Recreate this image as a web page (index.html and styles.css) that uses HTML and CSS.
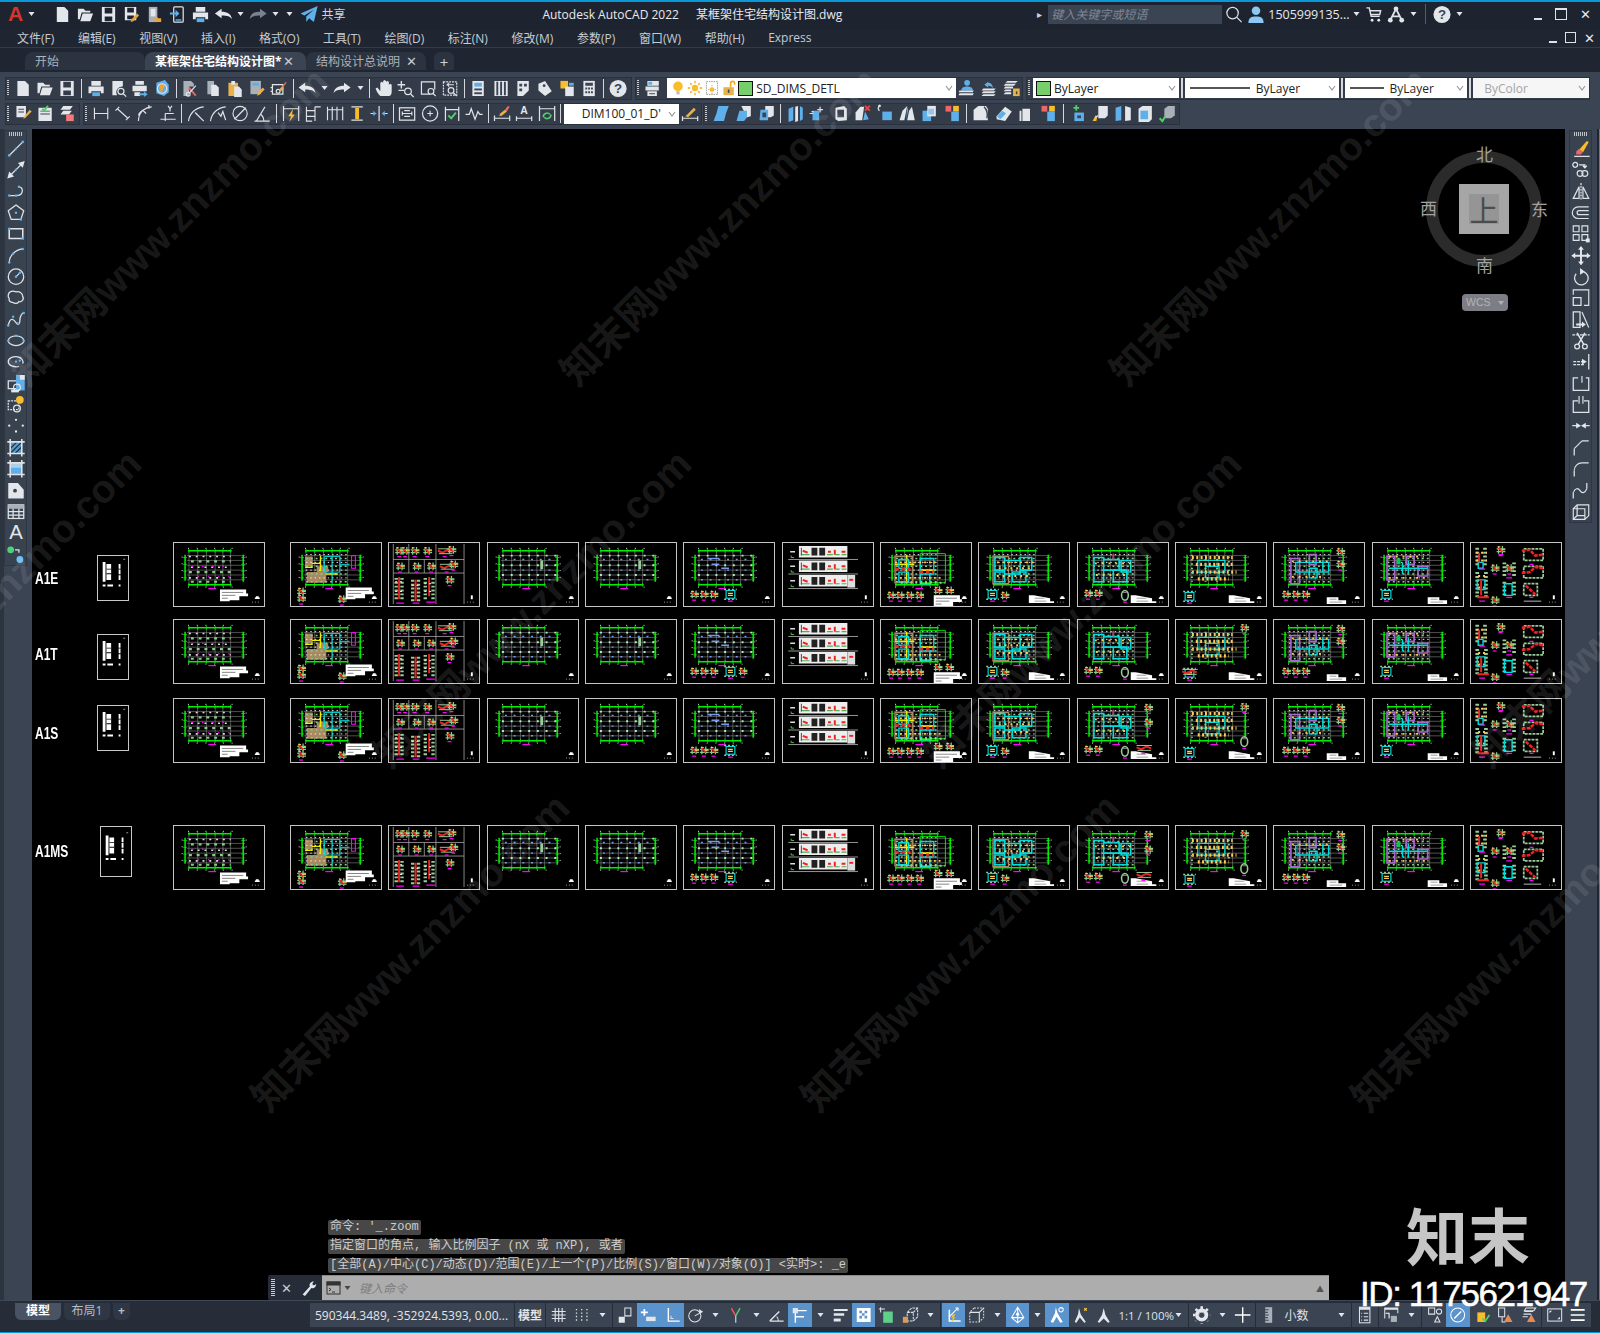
FILE: index.html
```html
<!DOCTYPE html>
<html lang="zh-CN">
<head>
<meta charset="utf-8">
<title>Autodesk AutoCAD 2022</title>
<link rel="stylesheet" href="styles.css">
</head>
<body>
<svg class="defs" xmlns="http://www.w3.org/2000/svg">
<defs>
<!-- toolbar icons -->
<symbol id="new" viewBox="0 0 20 20"><path class="w" d="M4 2h8l4 4v12H4z"/></symbol>
<symbol id="open" viewBox="0 0 20 20"><path class="w" d="M2 4h6l2 2h5v2H6l-2 7H2zM7 9h11l-3 8H4.500z"/></symbol>
<symbol id="save" viewBox="0 0 20 20"><path class="w" fill-rule="evenodd" d="M3 2h14v16H3zM6 3v6h8V3zM6 12v5h8v-5z"/></symbol>
<symbol id="saveas" viewBox="0 0 20 20"><path class="w" fill-rule="evenodd" d="M3 2h12v14H3zM5.500 3v5h7V3zM5.500 11v4h7v-4z"/><path class="o" d="M9 18l1-3 6-6 2 2-6 6z"/></symbol>
<symbol id="sset" viewBox="0 0 20 20"><path class="g" d="M4 2h9v16H4z"/><rect class="w" x="6" y="4" width="5" height="8"/><path class="o" d="M10 13h3l1 1h3v4h-7z"/></symbol>
<symbol id="phone" viewBox="0 0 20 20"><rect x="6" y="2" width="10" height="16" rx="1"/><path class="b" d="M2 8h6V5l4 4-4 4v-3H2z"/><rect class="b" x="8" y="15" width="6" height="1.500"/></symbol>
<symbol id="print" viewBox="0 0 20 20"><path class="w" d="M5 2h10v5H5zM2 8h16v7h-3v-2H5v2H2z"/><rect class="b" x="6" y="14" width="8" height="4"/></symbol>
<symbol id="prev" viewBox="0 0 20 20"><path class="w" d="M4 2h11v6a6 6 0 0 0-6 9H4z"/><circle cx="13" cy="13" r="3.200"/><path d="M15.500 15.500l3 3"/></symbol>
<symbol id="plot" viewBox="0 0 20 20"><path class="w" d="M5 2h9v4H5zM2 7h15v6H2zM4 14h6v4H4z"/><path class="b" d="M9 15h5v-2l4 3-4 3v-2H9z"/></symbol>
<symbol id="globe" viewBox="0 0 20 20"><path class="b" d="M4 4l9-3 4 5v8l-5 4-8-3z"/><path class="o" d="M7 5l4-1 2 3-2 3-1 5-3-4z"/><circle cx="10" cy="10" r="5"/></symbol>
<symbol id="cut" viewBox="0 0 20 20"><path class="g" d="M3 2h8l3 3v3H9v10H3z"/><path class="r" d="M9 8l8 9-2 1-7-8z"/><path d="M16 7L9 15"/><circle cx="8" cy="16" r="2"/></symbol>
<symbol id="copy" viewBox="0 0 20 20"><path class="g" d="M4 2h7v14H4z"/><path class="w" d="M8 6h5l3 3v9H8z"/></symbol>
<symbol id="paste" viewBox="0 0 20 20"><path class="t" d="M3 4h10v14H3z"/><path class="w" d="M6 2h4v4H6zM9 8h5l3 3v8H9z"/></symbol>
<symbol id="match" viewBox="0 0 20 20"><rect class="g" x="3" y="2" width="11" height="14"/><rect class="b" x="5" y="4" width="7" height="3"/><path class="t" d="M10 18l1-4 5-5 2 2-5 5z"/></symbol>
<symbol id="brush" viewBox="0 0 20 20"><path d="M3 6h11v10H3zM3 9H1M3 13H1"/><circle cx="9" cy="13" r="2"/><path class="r" d="M13 8l4-5 1 1-4 5z"/><path class="t" d="M10 11l3-3 2 2-3 3z"/></symbol>
<symbol id="undo" viewBox="0 0 20 20"><path class="w" d="M1 9l7-5v3c6 0 10 2 11 8-2-3-5-4-11-4v3z"/></symbol>
<symbol id="redo" viewBox="0 0 20 20"><path class="w" d="M19 9l-7-5v3C6 7 2 9 1 15c2-3 5-4 11-4v3z"/></symbol>
<symbol id="redod" viewBox="0 0 20 20"><path fill="#7a8290" stroke="none" d="M19 9l-7-5v3C6 7 2 9 1 15c2-3 5-4 11-4v3z"/></symbol>
<symbol id="pan" viewBox="0 0 20 20"><path class="w" d="M6 18c-2-2-4-5-5-8l2-1 3 4V4l1.500-1L9 4v6V2l1.500-1L12 2v8V3l1.500-1L15 3v8V6l1.500-1L18 6v7c0 3-1 5-3 5z"/></symbol>
<symbol id="zrt" viewBox="0 0 20 20"><path stroke-width="1.500" d="M5 2v8M1 6h8M2 12h6"/><circle cx="12" cy="13" r="3.500"/><path d="M15 16l3 3"/></symbol>
<symbol id="zw" viewBox="0 0 20 20"><path d="M12 16H3V3h14v8"/><circle cx="13" cy="13" r="3"/><path d="M15 15l3 3"/></symbol>
<symbol id="zp" viewBox="0 0 20 20"><path stroke-dasharray="2 1" d="M3 3h14v14H3z"/><path class="sb" d="M14 6H7l2-2M7 6l2 2"/><circle cx="11" cy="12" r="3"/><path d="M13 14l4 4"/></symbol>
<symbol id="props" viewBox="0 0 20 20"><path class="w" d="M4 2h12v16H4z"/><rect class="b" x="6" y="4" width="8" height="4"/><rect class="d" x="6" y="10" width="8" height="2"/><rect class="d" x="6" y="14" width="8" height="2"/></symbol>
<symbol id="dc" viewBox="0 0 20 20"><path class="w" d="M3 2h14v16H3z"/><path class="d" d="M5 3h2v14H5zM9 3h2v14H9zM13 3h2v14h-2z"/></symbol>
<symbol id="tp" viewBox="0 0 20 20"><path class="w" d="M4 2h12v10l-6 6H4z"/><path class="d" d="M6 5h3v3H6zM11 5h3v3h-3zM6 10h3v3H6z"/></symbol>
<symbol id="tag" viewBox="0 0 20 20"><path class="w" d="M3 5l7-3 7 11-7 5-7-6z"/><circle class="d" cx="9" cy="7" r="1.500"/></symbol>
<symbol id="mk" viewBox="0 0 20 20"><rect class="y" x="3" y="2" width="8" height="8"/><rect class="w" x="8" y="8" width="9" height="10"/><rect class="b" x="12" y="4" width="5" height="3"/></symbol>
<symbol id="calc" viewBox="0 0 20 20"><rect class="w" x="4" y="2" width="12" height="16"/><path class="d" d="M6 4h8v3H6zM6 9h2v2H6zM9 9h2v2H9zM12 9h2v2h-2zM6 13h2v2H6zM9 13h2v2H9zM12 13h2v2h-2z"/></symbol>
<symbol id="lyp" viewBox="0 0 20 20"><path class="w" d="M4 2h12v5H4zM2 8h14v4H2zM4 13h10v5H4z"/><rect class="b" x="5" y="3" width="4" height="3"/><rect class="d" x="6" y="15" width="6" height="1"/></symbol>
<symbol id="lym" viewBox="0 0 20 20"><circle class="b" cx="10" cy="4" r="3"/><path class="b" d="M4 12c0-3 3-4 6-4s6 1 6 4z"/><path class="w" d="M2 12h15l-1 2H1zM2 15h15l-1 2H1z"/></symbol>
<symbol id="lyb" viewBox="0 0 20 20"><path class="w" d="M4 10h13l-2 2H2zM4 13h13l-2 2H2zM4 16h13l-2 2H2z"/><path class="b" d="M9 3L5 6l4 3V7c3 0 4 1 5 3 0-4-2-6-5-6z"/></symbol>
<symbol id="lyl" viewBox="0 0 20 20"><path class="w" d="M5 2h11l-2 2H3zM3 5h11l-2 2H1zM3 8h8v2H1zM3 11h6v2H1zM3 14h6v2H1z"/><rect class="t" x="11" y="10" width="7" height="8"/><rect class="d" x="14" y="13" width="1.500" height="3"/></symbol>
<symbol id="bulb" viewBox="0 0 20 20"><circle class="y" cx="10" cy="8" r="6"/><rect fill="#bbb" stroke="none" x="8" y="14" width="4" height="4"/></symbol>
<symbol id="sun" viewBox="0 0 20 20"><circle class="y" cx="10" cy="10" r="4"/><path stroke="#f7a71b" stroke-width="1.600" d="M10 1v3M10 16v3M1 10h3M16 10h3M4 4l2 2M14 14l2 2M4 16l2-2M14 6l2-2"/></symbol>
<symbol id="vpf" viewBox="0 0 20 20"><path stroke-dasharray="2 1" d="M3 2h14v16H3z"/><circle class="y" cx="10" cy="12" r="3"/><path stroke="#f7a71b" d="M10 6v2M5 12h2M13 12h2M10 16v2"/></symbol>
<symbol id="lock" viewBox="0 0 20 20"><rect class="t" x="3" y="9" width="13" height="10"/><path stroke="#f7a71b" stroke-width="2" d="M12 9V4c0-3 5-3 5 0v2"/><rect class="d" x="8.500" y="12" width="2" height="4"/></symbol>
<!-- dim toolbar -->
<symbol id="t1" viewBox="0 0 20 20"><path class="w" d="M3 2h10v12H3z"/><path class="d" d="M5 5h6v1H5zM5 8h6v1H5z"/><path class="t" d="M10 16l2-4 5-6 2 2-6 6z"/></symbol>
<symbol id="t2" viewBox="0 0 20 20"><path class="w" d="M3 4h14v14H3z"/><path class="d" d="M5 7h10v1H5zM5 10h10v1H5z"/><path stroke="#4fd06c" stroke-width="2" d="M7 5l2 2 4-5"/></symbol>
<symbol id="t3" viewBox="0 0 20 20"><path class="w" d="M6 2h10l-3 4H3zM6 7h9l-3 4H3z"/><rect fill="#f27a7a" stroke="none" x="9" y="11" width="8" height="7"/></symbol>
<symbol id="dl" viewBox="0 0 20 20"><path class="sb" d="M3 4v12M17 4v12M3 10h14"/></symbol>
<symbol id="da" viewBox="0 0 20 20"><path class="sb" d="M2 7l4-4M13 17l4-4M4 5l11 10"/></symbol>
<symbol id="dar" viewBox="0 0 20 20"><path class="sb" d="M3 18C3 10 8 4 17 3M3 12C4 8 8 6 11 5"/><path d="M14 1v4M8 7l3 3"/></symbol>
<symbol id="dor" viewBox="0 0 20 20"><path class="sb" d="M2 16h16M7 10v8M7 10h9"/><path d="M10 2l2 3 2-3M12 5v3"/></symbol>
<symbol id="dra" viewBox="0 0 20 20"><path class="sb" d="M2 18C3 10 9 4 18 3"/><path d="M9 9l9 9"/></symbol>
<symbol id="djo" viewBox="0 0 20 20"><path class="sb" d="M2 18C3 10 9 4 18 3"/><path d="M10 9l3 4 2-5 3 9"/></symbol>
<symbol id="ddi" viewBox="0 0 20 20"><circle class="sb" cx="10" cy="10" r="7.500"/><path d="M4 16L16 4"/></symbol>
<symbol id="dan" viewBox="0 0 20 20"><path class="sb" d="M2 18h16M4 18L13 3"/><path d="M12 18c0-3-1-5-3-7"/></symbol>
<symbol id="dqk" viewBox="0 0 20 20"><path class="sb" d="M2 2v16M18 2v16M2 5h16"/><path class="y" d="M12 5l-5 8h3l-2 6 6-8h-3z"/></symbol>
<symbol id="dbs" viewBox="0 0 20 20"><path class="sb" d="M3 3v15h6M12 3h6M3 7h9M12 3v15M3 13h9"/></symbol>
<symbol id="dct" viewBox="0 0 20 20"><path class="sb" d="M2 3v14M7 3v14M12 3v14M18 3v14M2 6h16"/></symbol>
<symbol id="dsp" viewBox="0 0 20 20"><path d="M4 3h12M4 17h12"/><rect class="y" x="8" y="4" width="4" height="12"/></symbol>
<symbol id="dbr" viewBox="0 0 20 20"><path class="sb" d="M1 10h6M13 10h6"/><path d="M10 2v16"/><path class="b" d="M4 7l3 3-3 3zM16 7l-3 3 3 3z"/></symbol>
<symbol id="dto" viewBox="0 0 20 20"><rect x="2" y="4" width="16" height="13"/><path class="sb" d="M5 10h10M5 8v4M15 8v4"/><path d="M7 13h6M7 7h6"/></symbol>
<symbol id="dce" viewBox="0 0 20 20"><circle cx="10" cy="10" r="8"/><path class="sb" d="M10 7v6M7 10h6"/></symbol>
<symbol id="din" viewBox="0 0 20 20"><path d="M3 3v15M17 3v15M3 6h14"/><path stroke="#4fd06c" stroke-width="2" d="M6 12l3 3 5-6"/></symbol>
<symbol id="djg" viewBox="0 0 20 20"><path d="M1 11h4l2-6 4 11 3-8 2 3h3"/></symbol>
<symbol id="ded" viewBox="0 0 20 20"><path d="M2 18v-6M18 18v-6M2 15h16"/><path class="r" d="M13 6l3-4 2 1-3 5z"/><path class="t" d="M7 13l1-3 5-4 2 2-5 4z"/></symbol>
<symbol id="dtx" viewBox="0 0 20 20"><path d="M2 18v-5M18 18v-5M2 15h16"/><text class="tx" x="10" y="11">A</text></symbol>
<symbol id="dup" viewBox="0 0 20 20"><path d="M2 2v16M18 2v16M2 5h16"/><path stroke="#4fd06c" stroke-width="1.600" d="M6 14a4 4 0 0 1 7-3M14 11a4 4 0 0 1-7 3"/></symbol>
<symbol id="ds" viewBox="0 0 20 20"><path d="M2 18v-5M18 18v-5M2 15h16"/><path class="t" d="M5 13l2-2 7-7 2 2-8 8z"/></symbol>
<!-- solids -->
<symbol id="s1" viewBox="0 0 20 20"><path class="b" d="M7 2h11l-3 8-2 8H2l3-8z"/></symbol>
<symbol id="s2" viewBox="0 0 20 20"><path class="w" d="M8 2h10v11l-4 1z"/><path class="b" d="M6 7h8v7l-3 4H3z"/></symbol>
<symbol id="s3" viewBox="0 0 20 20"><path class="w" d="M9 2h9v10l-3 2H9z"/><path class="b" d="M4 6h8v11H3z"/><rect class="d" x="6" y="9" width="4" height="5"/></symbol>
<symbol id="s4" viewBox="0 0 20 20"><path class="w" d="M10 3l3-1v16l-3 1z"/><path class="b" d="M3 5l5-2v14l-5 2zM15 2l3 2v12l-3 2z"/></symbol>
<symbol id="s5" viewBox="0 0 20 20"><path class="b" d="M4 7h7v10H4z"/><path d="M3 8h2M1 10h4M12 3v6M9 6h6"/></symbol>
<symbol id="s6" viewBox="0 0 20 20"><path class="w" d="M5 4l9-2 3 3v12l-9 1-3-2z"/><rect class="d" x="7" y="6" width="7" height="8"/></symbol>
<symbol id="s7" viewBox="0 0 20 20"><path class="w" d="M3 17V9l5-6h4l-2 14z"/><path class="b" d="M11 17l2-9 4 8z"/><path stroke="#ee4444" stroke-width="2" d="M13 2l5 5M18 2l-5 5"/></symbol>
<symbol id="s8" viewBox="0 0 20 20"><path d="M4 2a3 3 0 0 0 0 5"/><circle cx="4" cy="2" r=".8"/><rect class="b" x="7" y="8" width="10" height="9"/></symbol>
<symbol id="s9" viewBox="0 0 20 20"><path class="w" d="M2 17l3-10 5-5-3 15zM10 17l2-10 3-4 3 14z"/><path class="b" d="M10 3l1 3-2 11z"/></symbol>
<symbol id="s10" viewBox="0 0 20 20"><rect class="b" x="3" y="7" width="9" height="11"/><rect class="w" x="8" y="2" width="9" height="11"/><rect class="b" x="9" y="5" width="6" height="6" opacity=".6"/></symbol>
<symbol id="s11" viewBox="0 0 20 20"><rect fill="#ee6666" stroke="none" x="3" y="2" width="6" height="6"/><rect class="y" x="11" y="2" width="6" height="6"/><rect class="b" x="9" y="8" width="8" height="10"/></symbol>
<symbol id="s12" viewBox="0 0 20 20"><path class="w" d="M2 6l5-4h8l2 3v12H2z"/><path stroke="#3b4453" stroke-width="1.500" d="M13 3c3 3 4 7 3 12"/></symbol>
<symbol id="s13" viewBox="0 0 20 20"><path class="w" d="M2 13l9-10 7 5-7 10-9-2z"/><path class="b" d="M2 13l6-6 4 3-6 6z"/></symbol>
<symbol id="s14" viewBox="0 0 20 20"><path class="w" d="M3 7h2v11H3zM6 5h8v13H6z"/></symbol>
<symbol id="s15" viewBox="0 0 20 20"><path stroke="#4fd06c" stroke-width="1.800" d="M8 1v6M5 4h6"/><rect class="b" x="6" y="9" width="10" height="9"/><rect class="d" x="9" y="12" width="4" height="3"/></symbol>
<symbol id="s16" viewBox="0 0 20 20"><path class="w" d="M8 2h10v10l-3 3H8z"/><path class="y" d="M2 18l3-6 2 1-1 5z"/><path d="M8 12L5 14"/></symbol>
<symbol id="s17" viewBox="0 0 20 20"><path class="b" d="M2 4l6-2v15l-6 1z"/><path class="w" d="M12 2l6 2v13l-6 1z"/></symbol>
<symbol id="s18" viewBox="0 0 20 20"><path class="w" d="M3 5l4-3h10v14l-3 3H3z"/><rect class="b" x="5" y="7" width="8" height="9"/></symbol>
<symbol id="s19" viewBox="0 0 20 20"><path class="g" d="M7 5l4-3h7v10l-4 3H7z"/><path stroke="#4fd06c" stroke-width="2" d="M2 15l3 3 3-5"/></symbol>
<!-- left tools -->
<symbol id="l1" viewBox="0 0 20 20"><path d="M3 17L17 3"/><circle class="b" cx="3" cy="17" r="1.400"/><circle class="b" cx="17" cy="3" r="1.400"/><circle class="b" cx="10" cy="10" r="1.200"/></symbol>
<symbol id="l2" viewBox="0 0 20 20"><path d="M5 15L15 5"/><path class="w" d="M1 19l2-7 5 5zM19 1l-2 7-5-5z"/><circle class="b" cx="10" cy="10" r="1.200"/></symbol>
<symbol id="l3" viewBox="0 0 20 20"><path d="M3 14h8c7 0 7-9 2-9"/><circle class="b" cx="3" cy="14" r="1.300"/><circle class="b" cx="10" cy="14" r="1.300"/><circle class="b" cx="13" cy="5" r="1.300"/></symbol>
<symbol id="l4" viewBox="0 0 20 20"><path d="M10 2l8 6-3 9H5L2 8z"/><circle class="b" cx="10" cy="10" r="1.300"/><circle class="b" cx="15" cy="17" r="1.300"/></symbol>
<symbol id="l5" viewBox="0 0 20 20"><path stroke-width="1.600" d="M3 5h14v10H3z"/><circle class="b" cx="3" cy="5" r="1.300"/><circle class="b" cx="17" cy="15" r="1.300"/></symbol>
<symbol id="l6" viewBox="0 0 20 20"><path d="M3 17C3 10 9 4 17 3"/><circle class="b" cx="3" cy="17" r="1.300"/><circle class="b" cx="7" cy="8" r="1.300"/><circle class="b" cx="17" cy="3" r="1.300"/></symbol>
<symbol id="l7" viewBox="0 0 20 20"><circle cx="10" cy="10" r="8"/><path class="sb" d="M10 10l4-4"/><circle class="b" cx="10" cy="10" r="1.300"/><circle class="b" cx="14" cy="6" r="1.300"/></symbol>
<symbol id="l8" viewBox="0 0 20 20"><path d="M4 4c3-2 4 0 6 0 3-1 7 1 7 5 2 3-2 6-4 5-2 3-5 2-6 1-3 0-5-2-4-4C1 9 2 5 4 4z"/></symbol>
<symbol id="l9" viewBox="0 0 20 20"><path d="M2 16c2-10 6-6 8-3s4 2 4-2 2-8 4-8"/><circle class="b" cx="2" cy="16" r="1.300"/><circle class="b" cx="7" cy="7" r="1.300"/><circle class="b" cx="12" cy="14" r="1.300"/><circle class="b" cx="18" cy="3" r="1.300"/></symbol>
<symbol id="l10" viewBox="0 0 20 20"><ellipse cx="10" cy="10" rx="8" ry="5"/><circle class="b" cx="10" cy="5" r="1.300"/><circle class="b" cx="18" cy="10" r="1.300"/><circle class="b" cx="2" cy="10" r="1.300"/></symbol>
<symbol id="l11" viewBox="0 0 20 20"><path d="M13 15C8 16 2 14 2 10s6-6 10-5 6 4 5 7"/><circle class="b" cx="10" cy="10" r="1.200"/><circle class="b" cx="14" cy="9" r="1.200"/></symbol>
<symbol id="l12" viewBox="0 0 20 20"><path d="M2 7h10v8H2z"/><rect class="b" x="10" y="1" width="9" height="16"/><path class="w" d="M14 1h5v5h-5z"/><circle cx="11" cy="14" r="3.500"/><rect class="w" x="5" y="16" width="8" height="3"/></symbol>
<symbol id="l13" viewBox="0 0 20 20"><path stroke-dasharray="2 1" d="M2 6h11v9H2z"/><circle class="y" cx="14" cy="5" r="4"/><circle cx="11" cy="14" r="3.500"/></symbol>
<symbol id="l14" viewBox="0 0 20 20"><circle class="w" cx="10" cy="4" r="1.200"/><circle class="w" cx="3" cy="10" r="1.200"/><circle class="w" cx="17" cy="10" r="1.200"/><circle class="w" cx="10" cy="16" r="1.200"/></symbol>
<symbol id="l15" viewBox="0 0 20 20"><rect class="b" x="4" y="4" width="12" height="12" opacity=".8"/><path stroke="#25303f" d="M5 15L15 5M4 11l7-7M9 16l7-7"/><path stroke-width="1.600" d="M1 4h18M1 16h18M4 1v18M16 1v18"/></symbol>
<symbol id="l16" viewBox="0 0 20 20"><rect class="b" x="4" y="4" width="12" height="12"/><path class="w" opacity=".6" d="M4 4h12v5H4z"/><path stroke-width="1.600" d="M1 4h18M1 16h18M4 1v18M16 1v18"/></symbol>
<symbol id="l17" viewBox="0 0 20 20"><path class="w" d="M2 2h10l6 7v9H2z"/><circle class="d" cx="9" cy="10" r="2"/></symbol>
<symbol id="l18" viewBox="0 0 20 20"><rect x="2" y="3" width="16" height="14"/><rect class="g" x="2" y="3" width="16" height="4"/><path d="M2 10h16M2 13.500h16M7 7v10M13 7v10"/></symbol>
<symbol id="l19" viewBox="0 0 20 20"><text class="tx big" x="10" y="17">A</text></symbol>
<symbol id="l20" viewBox="0 0 20 20"><circle fill="#4fd07a" stroke="none" cx="4.500" cy="5" r="3.500"/><circle fill="#6ec0f5" stroke="none" cx="14" cy="15" r="3.500"/><path d="M9 5h4v3"/></symbol>
<!-- right tools -->
<symbol id="r1" viewBox="0 0 20 20"><path class="y" d="M8 11l8-9 2 1-6 11z"/><path class="r" d="M5 13l3-3 4 3-2 3H5z"/><path class="sb" stroke-width="1.600" d="M3 18h16"/></symbol>
<symbol id="r2" viewBox="0 0 20 20"><circle cx="4" cy="5" r="2.500"/><path d="M8 5h6v3M12 6l2 2 2-2"/><circle class="sb" cx="9" cy="14" r="3"/><circle class="sb" cx="14" cy="14" r="3"/></symbol>
<symbol id="r3" viewBox="0 0 20 20"><path d="M8 5L2 17h6z"/><path d="M10 1v18" stroke-dasharray="2 1"/><path class="sb" d="M12 5l6 12h-6z"/></symbol>
<symbol id="r4" viewBox="0 0 20 20"><path class="sb" stroke-width="1.600" d="M18 4H7a6 6 0 0 0 0 12h11"/><path d="M18 8H8a2 2 0 0 0 0 4h10"/></symbol>
<symbol id="r5" viewBox="0 0 20 20"><path class="sb" d="M2 2h6v6H2zM11 2h6v6h-6zM2 11h6v6H2z"/><path d="M11 11h6v6h-6z"/><rect class="w" x="15" y="15" width="4" height="4"/></symbol>
<symbol id="r6" viewBox="0 0 20 20"><path class="w" d="M10 0l3 4h-2v5h5V7l4 3-4 3v-2h-5v5h2l-3 4-3-4h2v-5H4v2l-4-3 4-3v2h5V4H7z"/></symbol>
<symbol id="r7" viewBox="0 0 20 20"><path d="M5 7a7 7 0 1 0 8-2"/><path class="w" d="M9 1l5 4-5 3z"/></symbol>
<symbol id="r8" viewBox="0 0 20 20"><path d="M2 10h8v8H2z"/><path class="sb" stroke-width="1.600" d="M2 7V2h16v16h-5"/></symbol>
<symbol id="r9" viewBox="0 0 20 20"><path d="M2 2h7v16H2z"/><path class="sb" d="M11 2l7 16"/><path class="w" d="M5 14h6v-2l4 3-4 3v-2H5z"/></symbol>
<symbol id="r10" viewBox="0 0 20 20"><path class="sb" d="M1 4h18" stroke-dasharray="3 1"/><path stroke-width="1.600" d="M6 2l7 12M14 2L7 14"/><circle cx="6" cy="16" r="2.500"/><circle cx="14" cy="16" r="2.500"/></symbol>
<symbol id="r11" viewBox="0 0 20 20"><path d="M18 2v16"/><path class="sb" d="M2 10h10M2 13h12" stroke-dasharray="3 1"/><path class="w" d="M11 7l5 3-5 3z"/></symbol>
<symbol id="r12" viewBox="0 0 20 20"><path d="M7 4H2v13h16V4h-3"/><path class="sb" stroke-width="1.600" d="M11 2v7"/></symbol>
<symbol id="r13" viewBox="0 0 20 20"><path d="M7 6H2v12h16V6h-5"/><path class="sb" stroke-width="1.600" d="M8 1v8M12 1v8"/></symbol>
<symbol id="r14" viewBox="0 0 20 20"><path class="sb" stroke-width="1.600" d="M1 10h6M13 10h6"/><path class="w" d="M5 7l5 3-5 3zM15 7l-5 3 5 3z"/></symbol>
<symbol id="r15" viewBox="0 0 20 20"><path d="M18 3h-7"/><path class="sb" stroke-width="1.600" d="M11 3l-8 8"/><path d="M3 11v7"/></symbol>
<symbol id="r16" viewBox="0 0 20 20"><path d="M18 4h-7"/><path class="sb" stroke-width="1.600" d="M11 4a8 8 0 0 0-8 8"/><path d="M3 12v6"/></symbol>
<symbol id="r17" viewBox="0 0 20 20"><path class="sb" stroke-width="1.600" d="M2 12c2-5 5-5 7-2s5 3 7-2"/><path d="M2 18v-6M16 8V2"/></symbol>
<symbol id="r18" viewBox="0 0 20 20"><path class="sb" stroke-width="1.600" d="M2 7h12v11H2zM2 7l4-4h12v11l-4 4"/><path d="M6 3v4M6 7v7h8M6 14l-4 4"/></symbol>
<!-- status -->
<symbol id="i-grid" viewBox="0 0 20 20"><path stroke-width="1.300" d="M2 6h16M2 10h16M2 14h16M6 2v16M10 2v16M14 2v16"/></symbol>
<symbol id="i-snap" viewBox="0 0 20 20"><path stroke-width="1.500" stroke-dasharray="1.500 2.500" d="M4 3v15M10 3v15M16 3v15"/></symbol>
<symbol id="i-inf" viewBox="0 0 20 20"><path class="w" d="M2 12h7v7H2z"/><path d="M9 2h7v9H9zM9 12v-1"/></symbol>
<symbol id="i-dyn" viewBox="0 0 20 20"><path stroke-width="2" stroke="#fff" d="M5 3v8M1 7h8"/><rect class="w" x="7" y="12" width="11" height="5"/></symbol>
<symbol id="i-ort" viewBox="0 0 20 20"><path stroke="#fff" stroke-width="1.600" d="M5 2v15h13"/><path d="M8 11v3h3"/></symbol>
<symbol id="i-pol" viewBox="0 0 20 20"><circle cx="9" cy="11" r="7"/><path class="sb" d="M9 11l9-5"/><path class="w" d="M14 3l4 3-4 2z"/></symbol>
<symbol id="i-iso" viewBox="0 0 20 20"><path stroke="#ff5555" stroke-width="1.600" d="M5 2l5 9"/><path stroke="#4fd06c" stroke-width="1.600" d="M15 2l-5 9"/><path stroke="#9dc7ea" stroke-width="1.600" d="M10 11v8"/></symbol>
<symbol id="i-osn" viewBox="0 0 20 20"><path stroke-width="1.600" d="M2 17h16M2 17L13 6"/><path d="M12 17c0-2-1-4-2-5"/></symbol>
<symbol id="i-ot" viewBox="0 0 20 20"><path stroke="#fff" stroke-width="1.600" d="M5 5h13M5 5v14M5 12h10"/><rect class="w" x="2" y="2" width="6" height="6"/></symbol>
<symbol id="i-lw" viewBox="0 0 20 20"><path class="w" d="M2 3h16v2.500H2zM2 8h12v3H2zM2 14h8v3.500H2z"/></symbol>
<symbol id="i-tr" viewBox="0 0 20 20"><path fill="#fff" stroke="none" fill-rule="evenodd" d="M2 2h16v16H2zM5 5v3h3V5zM11 5v3h3V5zM8 8v3h3V8zM5 11v3h3v-3zM11 11v3h3v-3z"/></symbol>
<symbol id="i-qp" viewBox="0 0 20 20"><rect fill="#5fd08a" stroke="none" x="6" y="6" width="11" height="13"/><path d="M3 1v6M1 3h7"/></symbol>
<symbol id="i-sel" viewBox="0 0 20 20"><path d="M6 7l5-5h7v10l-5 5H6zM6 7h7v10M13 7l5-5" stroke-dasharray="3 1"/><rect fill="#d99a5a" stroke="none" x="1" y="12" width="6" height="7"/></symbol>
<symbol id="i-gz" viewBox="0 0 20 20"><path stroke="#fff" stroke-width="1.800" d="M5 4v13h13"/><path stroke="#fff" d="M5 12l9-9M12 2h3v3"/><path class="y" d="M9 9h3l-2 4h2l-4 5 1-5H7z"/></symbol>
<symbol id="i-q" viewBox="0 0 20 20"><path stroke-dasharray="2 1.500" d="M7 2h11v11l-5 5H2V7z"/><path class="sb" d="M2 7h11v11M13 7l5-5"/></symbol>
<symbol id="i-gi" viewBox="0 0 20 20"><path stroke="#fff" d="M10 1l7 12-7 6-7-6zM3 13h14M10 1v18"/><circle fill="#fff" stroke="none" cx="10" cy="9" r="2"/></symbol>
<symbol id="i-an" viewBox="0 0 20 20"><path fill="#fff" stroke="none" d="M9 1l2 7 6 10-3 1-4-7-4 7-3-1 5-10z"/><circle fill="none" stroke="#fff" cx="15" cy="4" r="2.500"/></symbol>
<symbol id="i-an2" viewBox="0 0 20 20"><path class="w" d="M8 2l2 7 6 9-2 1-5-6-4 6-2-1 4-9z"/><path stroke="#ffd24a" d="M14 2l3 3M17 2l-3 3"/></symbol>
<symbol id="i-an3" viewBox="0 0 20 20"><path class="w" d="M10 2l2 8 5 8-2 1-5-5-5 5-2-1 5-8z"/></symbol>
<symbol id="i-gear" viewBox="0 0 20 20"><circle cx="10" cy="10" r="5.500" stroke-width="4" stroke="#e3e6ea"/><path stroke="#e3e6ea" stroke-width="3" stroke-dasharray="3 3.500" d="M10 0v20M0 10h20M3 3l14 14M17 3L3 17"/><circle fill="#3b4453" stroke="none" cx="10" cy="10" r="3"/></symbol>
<symbol id="i-plus" viewBox="0 0 20 20"><path stroke="#fff" stroke-width="1.600" d="M10 1v18M1 10h18"/></symbol>
<symbol id="i-ruler" viewBox="0 0 20 20"><rect class="g" x="6" y="1" width="8" height="18"/><path stroke="#3b4453" d="M6 4h4M6 7h3M6 10h4M6 13h3M6 16h4"/></symbol>
<symbol id="i-list" viewBox="0 0 20 20"><rect x="4" y="1" width="12" height="18"/><rect class="w" x="4" y="1" width="12" height="3"/><path stroke-width="1.400" d="M6 8h1M9 8h5M6 12h1M9 12h5M6 16h1M9 16h5"/></symbol>
<symbol id="i-lay" viewBox="0 0 20 20"><path d="M2 14V2h15v6"/><rect class="w" x="2" y="2" width="15" height="2"/><rect class="g" x="9" y="11" width="7" height="7"/><path stroke="#fff" d="M3 8h4v6"/></symbol>
<symbol id="i-iso2" viewBox="0 0 20 20"><path d="M3 2h7v7H3zM10 18l3-6 3 6z"/><circle cx="15" cy="6" r="3"/></symbol>
<symbol id="i-clean" viewBox="0 0 20 20"><circle cx="10" cy="10" r="8" stroke="#fff"/><path stroke="#fff" stroke-width="1.600" d="M6 14l8-8"/></symbol>
<symbol id="i-chk" viewBox="0 0 20 20"><rect class="y" x="5" y="7" width="9" height="11"/><path class="b" d="M6 1v6M3 4h6"/><path stroke="#4fd06c" stroke-width="2" d="M11 14l3 3 5-7"/></symbol>
<symbol id="i-w" viewBox="0 0 20 20"><path d="M3 2h7v10H3zM7 12v6h4"/><path fill="#e78a5a" stroke="none" d="M14 9l5 9H9z"/></symbol>
<symbol id="i-w2" viewBox="0 0 20 20"><path d="M7 2h11l-2 3H5zM5 6h10M4 9h9M3 12h6"/><path fill="#e78a5a" stroke="none" d="M13 9l5 9H8z"/></symbol>
<symbol id="i-full" viewBox="0 0 20 20"><rect x="2" y="3" width="16" height="14"/><path class="w" d="M4 8l3-3H4zM16 12l-3 3h3z"/></symbol>
<symbol id="i-menu" viewBox="0 0 20 20"><path stroke="#fff" stroke-width="2" d="M2 4h16M2 10h16M2 16h16"/></symbol>
<!-- title -->
<symbol id="plane" viewBox="0 0 20 20"><path class="b" d="M1 9L19 1l-4 17-5-4-3 4v-6l8-7-10 6z"/></symbol>
<symbol id="search" viewBox="0 0 20 20"><circle cx="8.500" cy="8.500" r="6"/><path d="M13 13l5 5"/></symbol>
<symbol id="user" viewBox="0 0 20 20"><circle class="b2" cx="10" cy="6" r="4.500"/><path class="b2" d="M2 19c0-6 3-7 8-7s8 1 8 7z"/></symbol>
<symbol id="cart" viewBox="0 0 20 20"><path stroke-width="1.500" d="M2 3h3l2 9h9M6 6h11l-1 4H7"/><circle class="w" cx="8" cy="16" r="1.500"/><circle class="w" cx="15" cy="16" r="1.500"/></symbol>
<symbol id="a360" viewBox="0 0 20 20"><circle class="w" cx="10" cy="4" r="2.500"/><circle class="w" cx="4" cy="16" r="2.500"/><circle class="w" cx="16" cy="16" r="2.500"/><path stroke-width="2" d="M10 4L4 16M10 4l6 12M7 12h6"/></symbol>
<symbol id="help" viewBox="0 0 20 20"><circle class="w" cx="10" cy="10" r="9"/><text class="tx q" x="10" y="15">?</text></symbol>
<symbol id="dropi" viewBox="0 0 10 10"><path class="w" d="M2 3h6L5 7z"/></symbol>
<symbol id="tick" viewBox="0 0 10 10"><path fill="none" stroke="#9a9a9a" stroke-width="1.200" d="M2 3l3 4 3-4"/></symbol>
<symbol id="wrench" viewBox="0 0 20 20"><path class="w" d="M2 18l9-10c-1-3 1-6 5-6l-2 3 2 2 3-2c0 4-3 6-6 5L5 20z"/></symbol>

<!-- drawing blocks -->
<g id="gf">
<path stroke="#8a8a8a" stroke-width=".6" d="M13 13H73M13 18H73M13 23H73M13 28H73M13 33H73M13 38H73M15 7V44M24 7V44M33 7V44M42 7V44M50 7V44M58 7V44"/>
<path stroke="#0e0" stroke-width="1.600" d="M14 8H59M14 43H59M11 12V39M71 12V40"/>
<path stroke="#0e0" stroke-width=".8" d="M15 6V10M24 6V10M33 6V10M42 6V10M50 6V10M58 6V10M15 41V45M24 41V45M33 41V45M42 41V45M50 41V45M58 41V45M9 15H13M9 22H13M9 29H13M9 36H13M69 15H73M69 22H73M69 29H73M69 36H73"/>
<path stroke="#eee" stroke-width="1" stroke-dasharray="1 8" d="M14 5.500H60M14 45.500H60"/>
<path stroke="#eee" stroke-width="1" stroke-dasharray="1 6" d="M8 14V38M74 14V38"/>
<path stroke="#f0f" stroke-width="1.300" d="M35 47H43"/>
</g>
<g id="nz"><path stroke="#eee" stroke-width="1" stroke-dasharray="1.500 3" d="M15 12H58M15 20H58M15 28H58M15 36H58"/><path stroke="#8c8" stroke-width="1.500" stroke-dasharray="2 3" d="M15 16H58M15 24H58M15 32H58M15 40H58"/></g>
<g id="st"><path stroke="#fff" stroke-width="1.300" d="M83 57H88M84 55.500H87"/><path stroke="#ccc" stroke-width=".8" stroke-dasharray="1 2" d="M80 61H89"/></g>
<g id="tb1"><path fill="#fff" d="M0 0H27V4H29V7H20V11H10V12H0z"/><path stroke="#000" stroke-width=".5" d="M2 3H24M2 6H16M2 9H8"/></g>
<g id="tb2"><path fill="#fff" d="M0 0H5L22 3V6H26V8H0z"/><path stroke="#000" stroke-width=".4" d="M6 3H16M6 6H18"/></g>
<g id="tb3"><path fill="#fff" d="M0 0H12V3H20V7H0z"/><path stroke="#000" stroke-width=".4" d="M3 2H10M3 5H16"/></g>
<g id="d1"><path stroke="#8c8" stroke-width="1.300" d="M0 3H9M0 6H9M2 0V8M6 0V8"/><path stroke="#e22" stroke-width="1.800" d="M2 2L6 6"/><path stroke="#fc5" stroke-width="1" d="M1 1H4M5 4H9"/><path stroke="#f0f" stroke-width="1.300" d="M2 10H6"/></g>
<g id="d2"><rect x="1" y="1" width="9" height="8" stroke="#0dd" stroke-width="1.200"/><path stroke="#9c9" stroke-width="1.600" stroke-dasharray="2 2" d="M-1 0H12M-1 10H12"/><path stroke="#fc5" stroke-width="1.400" d="M3 4H8M3 6H8"/><path stroke="#f0f" stroke-width="1.300" d="M3 12H8"/></g>
<g id="d3"><ellipse cx="4" cy="6" rx="3.500" ry="5" stroke="#9c9" stroke-width="1.600"/><path stroke="#eee" stroke-width=".6" d="M2 3H6"/><path stroke="#f0f" stroke-width="1.300" d="M2 13H6"/></g>
<g id="d4"><path stroke="#e22" stroke-width="2" d="M0 3L5 5 10 2 15 4"/><path stroke="#9c9" d="M0 1H16M1 6H15"/><path stroke="#f0f" stroke-width="1.300" d="M5 9H9"/></g>
<g id="dots1"><path stroke="#aeb" stroke-width="2" stroke-dasharray="2 7" d="M14 13H70M14 23H70M14 33H70"/><path stroke="#79e" stroke-width="1.500" stroke-dasharray="2 7" d="M17 17H70M17 28H70M17 38H70"/></g>
<g id="dots2"><path stroke="#ddd" stroke-width="1.600" stroke-dasharray="2 5" d="M15 14H58M17 25H58M15 36H58"/><path stroke="#8c8" stroke-width="2.200" stroke-dasharray="3 5" d="M17 19H58M15 30H58M17 40H58"/><path stroke="#f0f" stroke-width="1.300" stroke-dasharray="1.500 9" d="M18 24H60M24 35H60"/></g>
<g id="p1"><use href="#gf"/><use href="#dots2"/><use href="#tb1" x="47" y="48"/><use href="#st"/></g>
<g id="p2"><use href="#gf"/>
<path fill="#a98a60" d="M14 14H22V24H14zM16 30H36V41H16zM26 24H38V30H26z"/>
<use href="#nz"/>
<path stroke="#ee0" stroke-width="1.400" d="M21 21H30M36 32H48M30 13V29M14 25H22"/>
<path stroke="#0dd" stroke-width="1" d="M34 14H50V30H34zM42 14V41M50 22H60"/>
<path stroke="#f0f" stroke-width="1.100" d="M62 13H66V26H62z"/>
<use href="#d1" x="6" y="46"/><use href="#d1" x="6" y="53"/><use href="#d1" x="48" y="54"/><use href="#tb1" x="56" y="46"/><use href="#st"/></g>
<g id="p3"><path stroke="#aaa" stroke-width=".8" d="M4 1V63M4 17H77M4 31H77M20 1V17M48 1V63M77 1V63M20 17V31M36 31V17"/>
<use href="#d1" x="6" y="4"/><use href="#d1" x="22" y="4"/><use href="#d1" x="35" y="4"/><use href="#d1" x="12" y="4"/><use href="#d4" x="50" y="5"/><use href="#d1" x="60" y="3"/><use href="#d1" x="7" y="20"/><use href="#d1" x="24" y="20"/><use href="#d1" x="39" y="20"/><use href="#d4" x="52" y="21"/><use href="#d1" x="62" y="18"/>
<path stroke="#9c9" stroke-width="3.500" stroke-dasharray="2 2" d="M7 36V60M13 36V60M24 38V60M30 38V60M37 36V58M45 36V58"/><path stroke="#e22" stroke-width="2" d="M10 35V58M27 38V60M41 35V55"/><path stroke="#fff" stroke-width="1" stroke-dasharray="2 3" d="M6 40H15M6 50H15M23 44H32M36 42H46M36 50H46"/><path stroke="#f0f" stroke-width="1.300" d="M7 62H15M24 62H31M38 61H47"/><use href="#d1" x="58" y="34"/>
<path stroke="#fff" stroke-width="2" d="M85 54V58"/><path stroke="#ccc" stroke-width=".8" stroke-dasharray="1 2" d="M80 61H89"/></g>
<g id="p4"><use href="#gf"/><use href="#dots1"/><path stroke="#9c9" stroke-width="3" d="M55 18V27"/><use href="#st"/></g>
<g id="p5"><use href="#gf"/><use href="#dots1"/><path stroke="#79e" stroke-width="1.600" d="M24 16H36M28 22H36M38 26H46"/><use href="#d1" x="6" y="49"/><use href="#d1" x="16" y="49"/><use href="#d1" x="26" y="49"/><use href="#d2" x="42" y="48"/><use href="#st"/></g>
<g id="strip"><path fill="#eee" d="M0 0H50V12H0z"/><path fill="#222" d="M13 2H19V10H13zM21 2H27V10H21z"/><path stroke="#e22" stroke-width="2" d="M4 5L9 7M30 6H33M37 4V9M44 6H48"/><path stroke="#5a5" stroke-width="1.200" d="M2 9H11M29 9H35M37 9H42M44 9H49"/><path fill="#444" d="M2 2H3V10H2z"/></g>
<g id="p7"><path stroke="#999" stroke-width="1" d="M5 17H77M5 32H77M5 47H77"/><path stroke="#ddd" stroke-width="1.400" d="M7 9H12M7 24H12M7 39H12"/><path stroke="#4c4" stroke-width="1" d="M8 13V15H11M8 28V30H11M8 43V45H11"/>
<use href="#strip" x="16" y="3"/><use href="#strip" x="16" y="18"/><use href="#strip" x="16" y="33"/><path fill="#ddd" d="M66 33H74V46H66z"/><path stroke="#e22" stroke-width="2" d="M68 38H72"/><path stroke="#fff" stroke-width="2" d="M85 54V58"/><path stroke="#ccc" stroke-width=".8" stroke-dasharray="1 2" d="M80 61H89"/></g>
<g id="p8"><use href="#gf"/><use href="#nz"/><path stroke="#0e0" fill="none" stroke-width="1" d="M40 11H66V41H40z"/>
<path stroke="#a98a60" stroke-width="1.400" d="M14 14H32V41H14z"/><path stroke="#ee0" stroke-width="1.600" d="M14 22H34M26 12V40M40 28H56"/><path stroke="#0dd" stroke-width="1.400" d="M18 17H28V26H18zM18 30H28V40H18zM40 16H54V32H40zM40 32H50V42H40z"/>
<path stroke="#e22" stroke-width="3" stroke-dasharray="3 3" d="M15 27H30M40 30H54"/><path stroke="#fc5" stroke-width="1.800" stroke-dasharray="2 3" d="M14 36H64M14 20H56"/><path stroke="#9c9" stroke-width="2" stroke-dasharray="2 3" d="M20 41H66"/>
<use href="#d1" x="6" y="50"/><use href="#d1" x="15" y="50"/><use href="#d1" x="25" y="50"/><use href="#d1" x="35" y="50"/><use href="#d1" x="54" y="45"/><use href="#d1" x="66" y="45"/><use href="#tb1" x="54" y="54"/><use href="#st"/></g>
<g id="p9"><use href="#gf"/><use href="#nz"/><path stroke="#a98a60" stroke-width="1.400" d="M14 14H30V42H14z"/><path stroke="#0dd" stroke-width="1.600" d="M16 15H26V28H16zM26 18H42V32H26zM16 30H26V40H16zM34 30H48V40H34zM42 15H54V28H42z"/>
<path stroke="#fc5" stroke-width="2" stroke-dasharray="2 4" d="M18 20H56M18 34H52M20 26H56"/>
<use href="#d2" x="8" y="48"/><use href="#d1" x="22" y="50"/><use href="#tb2" x="51" y="54"/><use href="#st"/></g>
<g id="p10"><use href="#gf"/><use href="#nz"/><path stroke="#0dd" stroke-width="1.600" d="M16 15H26V40H16zM26 17H42V28H26zM36 28H50V40H36zM44 18H54V30H44z"/><path stroke="#fc5" stroke-width="2" stroke-dasharray="2 5" d="M17 21H56M18 33H52"/><path stroke="#a46" stroke-width="2" d="M36 11V17"/>
<use href="#d1" x="6" y="48"/><use href="#d1" x="16" y="48"/><use href="#d3" x="44" y="48"/><use href="#tb2" x="54" y="54"/><use href="#st"/></g>
<g id="p11"><use href="#gf"/><path stroke="#0dd" stroke-width="1.300" d="M22 18H50V30H22zM30 24H44V36H30z"/><path stroke="#fc5" stroke-width="3.400" stroke-dasharray="2 2.500" d="M16 15H58M20 22H60M16 30H62M22 37H54"/><path stroke="#8c8" stroke-width="2.200" stroke-dasharray="1.500 3" d="M16 12V40M30 12V40M42 12V40M54 14V36"/>
<use href="#d2" x="8" y="50"/><use href="#tb2" x="54" y="54"/><use href="#st"/></g>
<g id="p12"><use href="#gf"/><use href="#nz"/><path stroke="#a6c" stroke-width="1.700" d="M17 16H26V42H17zM36 12H43V22H36z"/><path stroke="#0dd" stroke-width="1.500" d="M22 20H56V30H22zM36 26H44V36H36zM50 18V30"/><path stroke="#fc5" stroke-width="1.700" stroke-dasharray="2 5" d="M18 19H56M18 35H50"/>
<use href="#d1" x="64" y="5"/><use href="#d1" x="64" y="18"/><use href="#d1" x="8" y="49"/><use href="#d1" x="18" y="49"/><use href="#d1" x="28" y="49"/><use href="#tb3" x="54" y="56"/><use href="#st"/></g>
<g id="p13"><use href="#gf"/><use href="#nz"/><path stroke="#a6c" stroke-width="1.700" d="M14 14H22V38H14zM34 14H42V22H34zM46 24H56V34H46z"/><path stroke="#0dd" stroke-width="1.500" d="M16 26H56M30 20V32M36 18V32"/><path stroke="#fc5" stroke-width="1.700" stroke-dasharray="2 5" d="M16 14H52M16 36H54"/><path fill="#0c5" d="M24 16H28V22H24z"/>
<use href="#d2" x="8" y="48"/><use href="#tb3" x="56" y="56"/><use href="#st"/></g>
<g id="pd"><path stroke="#9c9" stroke-width="3.800" stroke-dasharray="2 2" d="M6 5V24M14 5V24M6 30V58M15 30V58M34 20V34M44 20V34M34 40V54M44 40V54"/><path stroke="#fc5" stroke-width="2" stroke-dasharray="2 3" d="M5 10H16M5 18H16M7 34H16M7 46H16"/><path stroke="#0dd" stroke-width="1.400" d="M7 20H12V26H7zM6 38H14V48H6zM34 42H42V54H34z"/><path stroke="#e22" stroke-width="2" d="M8 10V20M10 38V54M6 56H18"/>
<path stroke="#f0f" stroke-width="1.300" d="M8 27H14M8 60H14M28 12H33M36 36H42M36 56H42M60 56H64M60 22H64"/><use href="#d1" x="26" y="3"/><use href="#d1" x="20" y="22"/><use href="#d1" x="20" y="55"/><use href="#d1" x="35" y="22"/>
<path stroke="#9c9" stroke-width="1.800" stroke-dasharray="3 1" d="M54 6H74V18H54zM54 24H74V36H54zM54 42H68V54H54z"/><path stroke="#e22" stroke-width="2.600" stroke-dasharray="4 1" d="M52 8L60 7 66 13 74 12M52 31L60 30 66 25 74 26M56 44L66 53"/><path stroke="#eee" stroke-width=".8" d="M54 60H72"/><path stroke="#fff" stroke-width="2" d="M85 54V58"/><path stroke="#ccc" stroke-width=".8" stroke-dasharray="1 2" d="M80 61H89"/></g>
<g id="sm"><path fill="#fff" d="M5 6H8V27H5zM9 8H14V25H9z"/><path fill="#000" d="M9 13H14V14H9zM9 18H14V19H9z"/><path stroke="#fff" stroke-width="2" stroke-dasharray="5 1" d="M23 8V25"/><path stroke="#fff" stroke-width="2" d="M5 31H8M10 31H16M23 30V32"/><path stroke="#ccc" stroke-width=".8" d="M27 3H29"/></g>
</defs>
</svg>

<div class="app">
  <header class="titlebar">
    <span class="logo-a">A</span><svg class="dd"><use href="#dropi"/></svg>
    <div class="qat">
      <svg class="i"><use href="#new"/></svg><svg class="i"><use href="#open"/></svg><svg class="i"><use href="#save"/></svg><svg class="i"><use href="#saveas"/></svg><svg class="i"><use href="#sset"/></svg><svg class="i"><use href="#phone"/></svg><svg class="i"><use href="#print"/></svg><svg class="i"><use href="#undo"/></svg>
    </div>
    <svg class="dd narrow"><use href="#dropi"/></svg><svg class="i tight"><use href="#redod"/></svg><svg class="dd narrow"><use href="#dropi"/></svg><svg class="dd narrow far"><use href="#dropi"/></svg>
    <svg class="i plane"><use href="#plane"/></svg><span class="share">共享</span>
    <span class="doc">Autodesk AutoCAD 2022<span class="docname">某框架住宅结构设计图.dwg</span></span>
    <span class="chev">▸</span>
    <div class="searchbox">键入关键字或短语</div>
    <svg class="i srch"><use href="#search"/></svg>
    <svg class="i usr"><use href="#user"/></svg>
    <span class="uname">1505999135...</span><svg class="dd"><use href="#dropi"/></svg>
    <svg class="i cart"><use href="#cart"/></svg><svg class="i a360"><use href="#a360"/></svg><svg class="dd"><use href="#dropi"/></svg>
    <i class="tsep"></i>
    <svg class="i hlp"><use href="#help"/></svg><svg class="dd"><use href="#dropi"/></svg>
    <div class="winbtns"><span class="wmin"></span><span class="wmax"></span><span class="wx">✕</span></div>
  </header>
  <nav class="menubar">
    <span>文件(F)</span><span>编辑(E)</span><span>视图(V)</span><span>插入(I)</span><span>格式(O)</span><span>工具(T)</span><span>绘图(D)</span><span>标注(N)</span><span>修改(M)</span><span>参数(P)</span><span>窗口(W)</span><span>帮助(H)</span><span>Express</span>
    <div class="docbtns"><span class="wmin"></span><span class="wres"></span><span class="wx">✕</span></div>
  </nav>
  <div class="tabs">
    <div class="tab t-start">开始</div>
    <div class="tab active">某框架住宅结构设计图*<b>✕</b></div>
    <div class="tab t-third">结构设计总说明<b>✕</b></div>
    <div class="tab-add">+</div>
  </div>
  <div class="ribbon">
    <div class="tbrow">
      <div class="tb t-a"><i class="grip"></i>
        <svg class="i"><use href="#new"/></svg><svg class="i"><use href="#open"/></svg><svg class="i"><use href="#save"/></svg><i class="sep"></i>
        <svg class="i"><use href="#print"/></svg><svg class="i"><use href="#prev"/></svg><svg class="i"><use href="#plot"/></svg><svg class="i"><use href="#globe"/></svg><i class="sep"></i>
        <svg class="i"><use href="#cut"/></svg><svg class="i"><use href="#copy"/></svg><svg class="i"><use href="#paste"/></svg><svg class="i"><use href="#match"/></svg><svg class="i"><use href="#brush"/></svg><i class="sep"></i>
        <svg class="i"><use href="#undo"/></svg><svg class="dd"><use href="#dropi"/></svg><svg class="i"><use href="#redo"/></svg><svg class="dd"><use href="#dropi"/></svg><i class="sep"></i>
        <svg class="i"><use href="#pan"/></svg><svg class="i"><use href="#zrt"/></svg><svg class="i"><use href="#zw"/></svg><svg class="i"><use href="#zp"/></svg><i class="sep"></i>
        <svg class="i"><use href="#props"/></svg><svg class="i"><use href="#dc"/></svg><svg class="i"><use href="#tp"/></svg><svg class="i"><use href="#tag"/></svg><svg class="i"><use href="#mk"/></svg><svg class="i"><use href="#calc"/></svg><i class="sep"></i>
        <svg class="i"><use href="#help"/></svg>
      </div>
      <div class="tb t-b"><i class="grip"></i>
        <svg class="i"><use href="#lyp"/></svg>
        <div class="combo layer"><svg class="ci"><use href="#bulb"/></svg><svg class="ci"><use href="#sun"/></svg><svg class="ci"><use href="#vpf"/></svg><svg class="ci"><use href="#lock"/></svg><span class="sw"></span><span class="ctext">SD_DIMS_DETL</span><svg class="tk"><use href="#tick"/></svg></div>
        <svg class="i"><use href="#lym"/></svg><svg class="i"><use href="#lyb"/></svg><svg class="i"><use href="#lyl"/></svg>
      </div>
      <div class="tb t-c"><i class="grip"></i>
        <div class="combo c1"><span class="sw"></span><span class="ctext">ByLayer</span><svg class="tk"><use href="#tick"/></svg></div><i class="csep"></i>
        <div class="combo c2"><span class="ln"></span><span class="ctext">ByLayer</span><svg class="tk"><use href="#tick"/></svg></div><i class="csep"></i>
        <div class="combo c3"><span class="ln short"></span><span class="ctext">ByLayer</span><svg class="tk"><use href="#tick"/></svg></div><i class="csep"></i>
        <div class="combo c4"><span class="ctext dim">ByColor</span><svg class="tk"><use href="#tick"/></svg></div>
      </div>
    </div>
    <div class="tbrow">
      <div class="tb t-d"><i class="grip"></i><svg class="i"><use href="#t1"/></svg><svg class="i"><use href="#t2"/></svg><svg class="i"><use href="#t3"/></svg></div>
      <div class="tb t-e"><i class="grip"></i>
        <svg class="i"><use href="#dl"/></svg><svg class="i"><use href="#da"/></svg><svg class="i"><use href="#dar"/></svg><svg class="i"><use href="#dor"/></svg><i class="sep"></i>
        <svg class="i"><use href="#dra"/></svg><svg class="i"><use href="#djo"/></svg><svg class="i"><use href="#ddi"/></svg><svg class="i"><use href="#dan"/></svg><i class="sep"></i>
        <svg class="i"><use href="#dqk"/></svg><svg class="i"><use href="#dbs"/></svg><svg class="i"><use href="#dct"/></svg><svg class="i"><use href="#dsp"/></svg><svg class="i"><use href="#dbr"/></svg><i class="sep"></i>
        <svg class="i"><use href="#dto"/></svg><svg class="i"><use href="#dce"/></svg><svg class="i"><use href="#din"/></svg><svg class="i"><use href="#djg"/></svg><i class="sep"></i>
        <svg class="i"><use href="#ded"/></svg><svg class="i"><use href="#dtx"/></svg><svg class="i"><use href="#dup"/></svg><i class="sep"></i>
        <div class="combo dimc"><span class="ctext">DIM100_01_D'</span><svg class="tk"><use href="#tick"/></svg></div>
        <svg class="i"><use href="#ds"/></svg>
      </div>
      <div class="tb t-f"><i class="grip"></i>
        <svg class="i"><use href="#s1"/></svg><svg class="i"><use href="#s2"/></svg><svg class="i"><use href="#s3"/></svg><i class="sep"></i>
        <svg class="i"><use href="#s4"/></svg><svg class="i"><use href="#s5"/></svg><svg class="i"><use href="#s6"/></svg><svg class="i"><use href="#s7"/></svg><svg class="i"><use href="#s8"/></svg><svg class="i"><use href="#s9"/></svg><svg class="i"><use href="#s10"/></svg><svg class="i"><use href="#s11"/></svg><i class="sep"></i>
        <svg class="i"><use href="#s12"/></svg><svg class="i"><use href="#s13"/></svg><svg class="i"><use href="#s14"/></svg><svg class="i"><use href="#s11"/></svg><i class="sep"></i>
        <svg class="i"><use href="#s15"/></svg><svg class="i"><use href="#s16"/></svg><svg class="i"><use href="#s17"/></svg><svg class="i"><use href="#s18"/></svg><svg class="i"><use href="#s19"/></svg>
      </div>
    </div>
  </div>

  <main class="work">
    <aside class="side left"><div class="toolbox">
      <i class="hgrip"></i>
      <svg class="i"><use href="#l1"/></svg><svg class="i"><use href="#l2"/></svg><svg class="i"><use href="#l3"/></svg><svg class="i"><use href="#l4"/></svg><svg class="i"><use href="#l5"/></svg><svg class="i"><use href="#l6"/></svg><svg class="i"><use href="#l7"/></svg><svg class="i"><use href="#l8"/></svg><svg class="i"><use href="#l9"/></svg><svg class="i"><use href="#l10"/></svg><svg class="i"><use href="#l11"/></svg><svg class="i"><use href="#l12"/></svg><svg class="i"><use href="#l13"/></svg><svg class="i"><use href="#l14"/></svg><svg class="i"><use href="#l15"/></svg><svg class="i"><use href="#l16"/></svg><svg class="i"><use href="#l17"/></svg><svg class="i"><use href="#l18"/></svg><svg class="i"><use href="#l19"/></svg><svg class="i"><use href="#l20"/></svg>
    </div></aside>

    <section class="canvas">
      <div class="row r1">
        <div class="lbl">A1E</div><svg class="small" viewBox="0 0 32 46"><use href="#sm"/></svg>
        <svg class="sheet" viewBox="0 0 92 65"><use href="#p1"/></svg>
        <svg class="sheet" viewBox="0 0 92 65"><use href="#p2"/></svg>
        <svg class="sheet" viewBox="0 0 92 65"><use href="#p3"/></svg>
        <svg class="sheet" viewBox="0 0 92 65"><use href="#p4"/></svg>
        <svg class="sheet" viewBox="0 0 92 65"><use href="#p4"/></svg>
        <svg class="sheet" viewBox="0 0 92 65"><use href="#p5"/></svg>
        <svg class="sheet" viewBox="0 0 92 65"><use href="#p7"/></svg>
        <svg class="sheet" viewBox="0 0 92 65"><use href="#p8"/></svg>
        <svg class="sheet" viewBox="0 0 92 65"><use href="#p9"/></svg>
        <svg class="sheet" viewBox="0 0 92 65"><use href="#p10"/></svg>
        <svg class="sheet" viewBox="0 0 92 65"><use href="#p11"/></svg>
        <svg class="sheet" viewBox="0 0 92 65"><use href="#p12"/></svg>
        <svg class="sheet" viewBox="0 0 92 65"><use href="#p13"/></svg>
        <svg class="sheet" viewBox="0 0 92 65"><use href="#pd"/></svg>
      </div>
      <div class="row r2">
        <div class="lbl">A1T</div><svg class="small" viewBox="0 0 32 46"><use href="#sm"/></svg>
        <svg class="sheet" viewBox="0 0 92 65"><use href="#p1"/></svg>
        <svg class="sheet" viewBox="0 0 92 65"><use href="#p2"/></svg>
        <svg class="sheet" viewBox="0 0 92 65"><use href="#p3"/></svg>
        <svg class="sheet" viewBox="0 0 92 65"><use href="#p4"/></svg>
        <svg class="sheet" viewBox="0 0 92 65"><use href="#p4"/></svg>
        <svg class="sheet" viewBox="0 0 92 65"><use href="#p5"/><use href="#d1" x="56" y="49"/></svg>
        <svg class="sheet" viewBox="0 0 92 65"><use href="#p7"/></svg>
        <svg class="sheet" viewBox="0 0 92 65"><use href="#p8"/></svg>
        <svg class="sheet" viewBox="0 0 92 65"><use href="#p9"/></svg>
        <svg class="sheet" viewBox="0 0 92 65"><use href="#p10"/></svg>
        <svg class="sheet" viewBox="0 0 92 65"><use href="#p11"/><use href="#d1" x="66" y="4"/><use href="#d4" x="6" y="50"/></svg>
        <svg class="sheet" viewBox="0 0 92 65"><use href="#p12"/></svg>
        <svg class="sheet" viewBox="0 0 92 65"><use href="#p13"/></svg>
        <svg class="sheet" viewBox="0 0 92 65"><use href="#pd"/></svg>
      </div>
      <div class="row r3">
        <div class="lbl">A1S</div><svg class="small" viewBox="0 0 32 46"><use href="#sm"/></svg>
        <svg class="sheet" viewBox="0 0 92 65"><use href="#p1"/></svg>
        <svg class="sheet" viewBox="0 0 92 65"><use href="#p2"/></svg>
        <svg class="sheet" viewBox="0 0 92 65"><use href="#p3"/></svg>
        <svg class="sheet" viewBox="0 0 92 65"><use href="#p4"/></svg>
        <svg class="sheet" viewBox="0 0 92 65"><use href="#p4"/></svg>
        <svg class="sheet" viewBox="0 0 92 65"><use href="#p5"/></svg>
        <svg class="sheet" viewBox="0 0 92 65"><use href="#p7"/></svg>
        <svg class="sheet" viewBox="0 0 92 65"><use href="#p8"/></svg>
        <svg class="sheet" viewBox="0 0 92 65"><use href="#p9"/></svg>
        <svg class="sheet" viewBox="0 0 92 65"><use href="#p10"/><use href="#d1" x="68" y="5"/><use href="#d1" x="68" y="20"/><use href="#d4" x="60" y="47"/></svg>
        <svg class="sheet" viewBox="0 0 92 65"><use href="#p11"/><use href="#d1" x="66" y="4"/><use href="#d3" x="66" y="38"/></svg>
        <svg class="sheet" viewBox="0 0 92 65"><use href="#p12"/></svg>
        <svg class="sheet" viewBox="0 0 92 65"><use href="#p13"/></svg>
        <svg class="sheet" viewBox="0 0 92 65"><use href="#pd"/></svg>
      </div>
      <div class="row r4">
        <div class="lbl">A1MS</div><svg class="small" viewBox="0 0 32 46"><use href="#sm"/></svg>
        <svg class="sheet" viewBox="0 0 92 65"><use href="#p1"/></svg>
        <svg class="sheet" viewBox="0 0 92 65"><use href="#p2"/></svg>
        <svg class="sheet" viewBox="0 0 92 65"><use href="#p3"/></svg>
        <svg class="sheet" viewBox="0 0 92 65"><use href="#p4"/></svg>
        <svg class="sheet" viewBox="0 0 92 65"><use href="#p4"/></svg>
        <svg class="sheet" viewBox="0 0 92 65"><use href="#p5"/></svg>
        <svg class="sheet" viewBox="0 0 92 65"><use href="#p7"/></svg>
        <svg class="sheet" viewBox="0 0 92 65"><use href="#p8"/></svg>
        <svg class="sheet" viewBox="0 0 92 65"><use href="#p9"/></svg>
        <svg class="sheet" viewBox="0 0 92 65"><use href="#p10"/><use href="#d1" x="68" y="5"/><use href="#d1" x="68" y="20"/><use href="#d4" x="60" y="47"/></svg>
        <svg class="sheet" viewBox="0 0 92 65"><use href="#p11"/><use href="#d1" x="66" y="4"/><use href="#d3" x="66" y="38"/></svg>
        <svg class="sheet" viewBox="0 0 92 65"><use href="#p12"/></svg>
        <svg class="sheet" viewBox="0 0 92 65"><use href="#p13"/></svg>
        <svg class="sheet" viewBox="0 0 92 65"><use href="#pd"/></svg>
      </div>

      <div class="viewcube">
        <div class="ring"></div>
        <div class="cube"><div class="cubeface">上</div></div>
        <span class="dir n">北</span><span class="dir s">南</span><span class="dir w-d">西</span><span class="dir e">东</span>
        <div class="wcs">WCS<svg class="wcsd"><use href="#dropi"/></svg></div>
      </div>

      <div class="history">
        <div>命令: '_.zoom</div>
        <div>指定窗口的角点, 输入比例因子 (nX 或 nXP), 或者</div>
        <div>[全部(A)/中心(C)/动态(D)/范围(E)/上一个(P)/比例(S)/窗口(W)/对象(O)] &lt;实时&gt;: _e</div>
      </div>
      <div class="cmdline">
        <div class="cmdtools"><i class="cgrip"></i><span class="cx">✕</span><svg class="wrench"><use href="#wrench"/></svg></div>
        <div class="cmdinput"><svg class="cmdp" viewBox="0 0 16 16"><rect x="1" y="2" width="13" height="12"/><rect x="1" y="2" width="13" height="3" fill="#333"/><path d="M3 8l2 1.500L3 11M6 12h3"/></svg><svg class="dd dark"><use href="#dropi"/></svg><span class="prompt">键入命令</span><span class="up">▲</span></div>
      </div>
    </section>

    <aside class="side right"><div class="toolbox">
      <i class="hgrip"></i>
      <svg class="i"><use href="#r1"/></svg><svg class="i"><use href="#r2"/></svg><svg class="i"><use href="#r3"/></svg><svg class="i"><use href="#r4"/></svg><svg class="i"><use href="#r5"/></svg><svg class="i"><use href="#r6"/></svg><svg class="i"><use href="#r7"/></svg><svg class="i"><use href="#r8"/></svg><svg class="i"><use href="#r9"/></svg><svg class="i"><use href="#r10"/></svg><svg class="i"><use href="#r11"/></svg><svg class="i"><use href="#r12"/></svg><svg class="i"><use href="#r13"/></svg><svg class="i"><use href="#r14"/></svg><svg class="i"><use href="#r15"/></svg><svg class="i"><use href="#r16"/></svg><svg class="i"><use href="#r17"/></svg><svg class="i"><use href="#r18"/></svg>
    </div></aside>
  </main>

  <footer class="status">
    <div class="layouts"><span class="lt on">模型</span><span class="lt">布局1</span><span class="lt add">+</span></div>
    <div class="sgroup coords">590344.3489, -352924.5393, 0.00...</div>
    <div class="sgroup mdl">模型</div>
    <div class="sgroup"><svg class="sb"><use href="#i-grid"/></svg><svg class="sb"><use href="#i-snap"/></svg><svg class="sd"><use href="#dropi"/></svg></div>
    <div class="sgroup"><svg class="sb"><use href="#i-inf"/></svg><svg class="sb on"><use href="#i-dyn"/></svg><svg class="sb on"><use href="#i-ort"/></svg><svg class="sb"><use href="#i-pol"/></svg><svg class="sd"><use href="#dropi"/></svg><svg class="sb"><use href="#i-iso"/></svg><svg class="sd"><use href="#dropi"/></svg><svg class="sb"><use href="#i-osn"/></svg><svg class="sb on"><use href="#i-ot"/></svg><svg class="sd"><use href="#dropi"/></svg><svg class="sb"><use href="#i-lw"/></svg><svg class="sb on"><use href="#i-tr"/></svg><svg class="sb"><use href="#i-qp"/></svg><svg class="sb"><use href="#i-sel"/></svg><svg class="sd"><use href="#dropi"/></svg></div>
    <div class="sgroup"><svg class="sb on"><use href="#i-gz"/></svg><svg class="sb"><use href="#i-q"/></svg><svg class="sd"><use href="#dropi"/></svg><svg class="sb on"><use href="#i-gi"/></svg><svg class="sd"><use href="#dropi"/></svg></div>
    <div class="sgroup g-an"><svg class="sb on"><use href="#i-an"/></svg><svg class="sb"><use href="#i-an2"/></svg><svg class="sb"><use href="#i-an3"/></svg><span class="stxt scale">1:1 / 100%</span><svg class="sd"><use href="#dropi"/></svg></div>
    <div class="sgroup"><svg class="sb"><use href="#i-gear"/></svg><svg class="sd"><use href="#dropi"/></svg></div>
    <div class="sgroup g-plus"><svg class="sb"><use href="#i-plus"/></svg></div>
    <div class="sgroup units"><svg class="sb"><use href="#i-ruler"/></svg><span class="stxt">小数</span><svg class="sd push"><use href="#dropi"/></svg></div>
    <div class="sgroup"><svg class="sb"><use href="#i-list"/></svg></div>
    <div class="sgroup"><svg class="sb"><use href="#i-lay"/></svg><svg class="sd"><use href="#dropi"/></svg></div>
    <div class="sgroup g-iso"><svg class="sb"><use href="#i-iso2"/></svg></div>
    <div class="sgroup"><svg class="sb on"><use href="#i-clean"/></svg><svg class="sb"><use href="#i-chk"/></svg><svg class="sb"><use href="#i-w"/></svg><svg class="sb"><use href="#i-w2"/></svg></div>
    <div class="sgroup"><svg class="sb"><use href="#i-full"/></svg><svg class="sb"><use href="#i-menu"/></svg></div>
  </footer>

  <svg class="wm" viewBox="0 0 1600 1333">
    <text transform="translate(27 388) rotate(-45)">知末网www.znzmo.com</text>
    <text transform="translate(577 388) rotate(-45)">知末网www.znzmo.com</text>
    <text transform="translate(1127 388) rotate(-45)">知末网www.znzmo.com</text>
    <text transform="translate(-160 770) rotate(-45)">知末网www.znzmo.com</text>
    <text transform="translate(390 770) rotate(-45)">知末网www.znzmo.com</text>
    <text transform="translate(940 770) rotate(-45)">知末网www.znzmo.com</text>
    <text transform="translate(1490 770) rotate(-45)">知末网www.znzmo.com</text>
    <text transform="translate(268 1114) rotate(-45)">知末网www.znzmo.com</text>
    <text transform="translate(818 1114) rotate(-45)">知末网www.znzmo.com</text>
    <text transform="translate(1368 1114) rotate(-45)">知末网www.znzmo.com</text>
  </svg>
  <div class="brand">知末</div>
  <div class="brandid">ID: 1175621947</div>
</div>
</body>
</html>
```

FILE: styles.css
```css
* { box-sizing: border-box; }
html, body { margin: 0; padding: 0; background: #000; }
body { font-family: "Open Sans", "Noto Sans CJK SC", sans-serif; font-size: 12px; color: #d4d8de; }
i { font-style: normal; display: block; flex: none; }
.defs { position: absolute; width: 0; height: 0; overflow: hidden; }

/* icon paint */
.w { fill: #e3e6ea; stroke: none; }
.g { fill: #aab0b8; stroke: none; }
.b { fill: #5fb0ea; stroke: none; }
.b2 { fill: #8cc8f2; stroke: none; }
.d { fill: #3b4453; stroke: none; }
.o { fill: #e8a33a; stroke: none; }
.t { fill: #e8b14a; stroke: none; }
.y { fill: #f9bd2b; stroke: none; }
.r { fill: #e46a6a; stroke: none; }
.sb { stroke: #74bdf0; }
.tx { fill: #e3e6ea; stroke: none; font: 700 11px "Liberation Sans", sans-serif; text-anchor: middle; }
.tx.big { font-size: 21px; font-weight: 400; }
.tx.q { fill: #3b4453; font-size: 14px; }

.app { position: relative; width: 1600px; height: 1333px; overflow: hidden; display: flex; flex-direction: column; background: #1f2632; }

.i { flex: none; width: 22.2px; height: 19px; fill: none; stroke: #dfe3e8; stroke-width: 1.3; }
.dd { flex: none; width: 13px; height: 10px; }

/* title */
.titlebar { flex: none; height: 30px; border-top: 2px solid #0a98d8; display: flex; align-items: center; padding: 0 0 4px 8px; background: #1d2430; }
.logo-a { color: #d8342a; font: 700 21px "Liberation Sans", sans-serif; width: 16px; margin-right: 1px; }
.qat { display: flex; margin-left: 13px; }
.qat .i { width: 23px; }
.titlebar .narrow { width: 11px; }
.titlebar .far { margin-left: 3px; }
.titlebar .tight { margin: 0 1px; }
.plane { margin-left: 3px; }
.share { margin-left: 1px; color: #cfd6de; font-size: 12px; }
.doc { margin-left: 197px; font-size: 12px; color: #e8eaee; white-space: nowrap; }
.docname { margin-left: 17px; }
.chev { margin-left: 195px; color: #cfd3d8; font-size: 10px; width: 7px; }
.searchbox { width: 174px; height: 19px; margin-left: 4px; background: #3b4453; color: #7f8896; font-style: italic; font-size: 12px; line-height: 19px; padding-left: 3px; }
.srch { margin-left: 1px; }
.srch, .usr, .cart, .a360, .hlp { width: 22px; }
.uname { margin-left: 1px; font-size: 12.5px; color: #e6e9ed; white-space: nowrap; }
.tsep { width: 1px; height: 20px; background: #555d6b; margin: 0 5px; }
.winbtns { margin-left: auto; margin-right: 9px; display: flex; align-items: center; gap: 13px; }
.wmin { display: block; width: 8px; height: 2px; background: #dfe3e8; margin-top: 9px; }
.wmax { display: block; width: 12px; height: 12px; border: 1.500px solid #dfe3e8; border-top-width: 2px; }
.wx { color: #e6e9ed; font-size: 13px; line-height: 14px; }

/* menu */
.menubar { flex: none; height: 17px; margin-top: -1px; margin-bottom: 1px; display: flex; align-items: center; gap: 23.600px; padding-left: 17px; background: #1f2632; color: #c6ccd3; font-size: 12px; white-space: nowrap; }
.docbtns { margin-left: auto; margin-right: 5px; display: flex; align-items: center; gap: 8px; }
.wres { display: block; width: 11px; height: 11px; border: 1.500px solid #dfe3e8; }

/* tabs */
.tabs { flex: none; height: 25px; display: flex; padding: 4px 0 2px 25px; border-top: 1px solid #343b48; background: #1f2632; align-items: stretch; }
.tab { padding: 0 0 0 10px; display: flex; align-items: center; background: #2b3240; color: #aab2bc; border-radius: 8px 8px 0 0; font-size: 12px; }
.tab b { font-weight: 400; color: #c5cad1; font-size: 13px; }
.t-start { width: 120px; }
.tab.active { width: 161px; background: #3b4453; color: #fff; font-weight: 700; }
.tab.active b { margin-left: 1px; }
.t-third { width: 120px; }
.t-third b { margin-left: 6px; }
.tab-add { width: 20px; margin-left: 8px; background: #2b3240; text-align: center; color: #cfd3d8; font-size: 15px; border-radius: 6px 6px 0 0; }

/* ribbon */
.ribbon { flex: none; height: 57px; background: #3b4453; padding: 5px 0 0 5px; display: flex; flex-direction: column; gap: 3px; }
.tbrow { display: flex; height: 22.500px; align-items: stretch; gap: 3px; }
.tb { display: flex; flex: none; align-items: center; background: #343c4a; border: 1px solid #2a303c; height: 100%; }
.grip { width: 2px; height: 16px; margin: 0 3px 0 1px; background: repeating-linear-gradient(#c8ccd2 0 1px, transparent 1px 2px); }
.sep { width: 1px; height: 19px; margin: 0 2.500px; background: #d5d9de; }
.t-a { width: 627px; }
.t-b { width: 388px; }
.t-c { width: 564px; }
.combo { display: flex; align-items: center; height: 20px; background: #fff; color: #222; padding-left: 3px; position: relative; }
.combo .tk { position: absolute; right: 2px; top: 5px; width: 10px; height: 10px; }
.ci { flex: none; width: 16px; height: 16px; fill: none; stroke: #888; stroke-width: 1; margin-right: 1px; }
.sw { flex: none; width: 15px; height: 15px; background: #77cf6b; border: 1px solid #111; margin-right: 3px; }
.ctext { font-size: 12px; white-space: nowrap; }
.ctext.dim { color: #a4a4a4; margin-left: 8px; }
.layer { flex: none; width: 289px; margin-left: 3px; }
.c1 { width: 146px; }
.c2 { width: 155px; }
.c3 { width: 122px; }
.c4 { width: 116px; background: #f6f6f6; }
.csep { width: 2px; height: 20px; margin: 0 2px; background: #d5d9de; }
.ln { flex: none; width: 60px; height: 2px; background: #555; margin: 0 6px 0 2px; }
.ln.short { width: 34px; margin-right: 5px; }
.t-d { width: 75px; }
.dimc { flex: none; width: 115px; padding-left: 18px; }
.t-f { margin-left: -2px; }
.t-f .i { width: 22.4px; }
.t-f .sep { margin: 0 3px; }

/* work */
.work { flex: 1; display: flex; min-height: 0; }
.side { flex: none; background: #3b4453; }
.side.left { width: 32px; padding: 1px 5px 0 4px; background: linear-gradient(90deg, #2c3440 0 4px, #3b4453 4px); }
.side.right { width: 35px; padding: 1px 8px 0 4px; background: linear-gradient(90deg, #3b4453 0 32px, #1f2632 32px 34px, #0a98d8 34px); }
.toolbox { display: flex; flex-direction: column; align-items: center; gap: 0; border: 1px solid #2f3643; padding-top: 1px; background: #39424f; }
.toolbox .i { width: 20px; height: 21.350px; padding: 1px 0; }
.hgrip { width: 14px; height: 4px; margin-bottom: 2px; background: repeating-linear-gradient(90deg, #bfc4ca 0 1px, transparent 1px 2px); }

/* canvas */
.canvas { flex: 1; position: relative; background: #000; padding-top: 413px; min-width: 0; }
.row { display: grid; grid-template-columns: 62px 76px 117px repeat(13, 98.330px); padding-left: 3px; height: 65px; }
.r2 { margin-top: 12px; }
.r3 { margin-top: 14px; }
.r4 { margin-top: 62px; }
.lbl { color: #fff; font: 700 16px/65px "Liberation Sans", sans-serif; transform: scaleX(.75); transform-origin: 0 50%; }
.r1 .lbl { line-height: 74px; }
.r2 .lbl { line-height: 72px; }
.r3 .lbl { line-height: 71px; }
.r4 .lbl { line-height: 54px; }
.small { width: 32px; height: 46px; border: 1.500px solid #c8c8c8; filter: blur(.3px); }
.r1 .small { margin-top: 13px; }
.r2 .small { margin-top: 15px; }
.r3 .small { margin-top: 7px; }
.r4 .small { margin: 1px 0 0 3px; height: 51px; }
.sheet { width: 92px; height: 65px; border: 1.500px solid #c4c4c4; fill: none; filter: blur(.4px); }

/* viewcube */
.viewcube { position: absolute; left: 1370px; top: 13px; width: 150px; height: 190px; }
.ring { position: absolute; left: 24px; top: 9px; width: 116px; height: 116px; border-radius: 50%; border: 12px solid #2b2b2b; }
.cube { position: absolute; left: 57px; top: 42px; width: 50px; height: 50px; background: #a6a6a6; padding: 10px; }
.cubeface { width: 30px; height: 30px; background: #959595; color: #4c4c4c; font: 400 29px/30px "Noto Sans CJK SC", sans-serif; text-align: center; }
.dir { position: absolute; color: #a2a2a2; font: 400 17px/20px "Noto Sans CJK SC", sans-serif; }
.n { left: 74px; top: 2px; }
.s { left: 74px; top: 113px; }
.w-d { left: 18px; top: 56px; }
.e { left: 129px; top: 57px; }
.wcs { position: absolute; left: 60px; top: 152px; width: 46px; height: 17px; border-radius: 4px; background: #7d7d85; color: #b4b4b8; font: 400 10.500px/17px "Liberation Sans", sans-serif; padding-left: 4px; }
.wcsd { position: absolute; right: 2px; top: 4px; width: 10px; height: 10px; opacity: .5; }

/* command */
.history { position: absolute; left: 296px; top: 1091px; display: flex; flex-direction: column; align-items: flex-start; gap: 4px; font: 12px/15px "Liberation Mono", "Noto Sans CJK SC", monospace; color: #cdcdcd; }
.history div { background: #474747; padding: 0 2px; border-radius: 2px; white-space: nowrap; }
.cmdline { position: absolute; left: 236px; top: 1146px; width: 1061px; height: 25px; display: flex; }
.cmdtools { flex: none; width: 54px; background: #262d39; display: flex; align-items: center; border-radius: 2px 0 0 2px; }
.cgrip { width: 4px; height: 18px; margin: 0 6px 0 3px; background: repeating-linear-gradient(#c8ccd2 0 1px, transparent 1px 2px); }
.cx { color: #c8cdd3; font-size: 13px; margin-right: 9px; }
.wrench { flex: none; width: 16px; height: 18px; }
.cmdinput { flex: 1; background: #adadad; display: flex; align-items: center; padding-left: 4px; border-top: 1px solid #8b8b8b; }
.cmdp { width: 16px; height: 16px; fill: none; stroke: #333; stroke-width: 1; }
.cmdinput .dd { width: 11px; filter: brightness(.3); }
.prompt { margin-left: 6px; color: #7d7d7d; font-style: italic; font-size: 12px; }
.up { margin-left: auto; margin-right: 5px; color: #555; font-size: 8px; }

/* status */
.status { flex: none; height: 33px; display: flex; align-items: flex-start; padding-top: 2px; gap: 1px; background: #262d39; border-bottom: 1px solid #0a98d8; border-top: 1px solid #3f4855; }
.layouts { width: 309px; height: 23px; display: flex; padding-left: 15px; gap: 3px; }
.lt { width: 46px; height: 17px; border-radius: 0 0 6px 6px; background: #2f3744; color: #b7bdc5; text-align: center; font-size: 12px; line-height: 16px; }
.lt.on { background: #4a5363; color: #fff; font-weight: 700; }
.lt.add { width: 17px; font-weight: 700; }
.sgroup { height: 24px; display: flex; align-items: center; background: #3b4453; padding: 0 1px; }
.coords { width: 204px; font-size: 12px; color: #e2e5e9; padding-left: 5px; white-space: nowrap; }
.mdl { width: 30px; justify-content: center; color: #e2e5e9; font-weight: 700; }
.sb { flex: none; width: 23.400px; height: 24px; padding: 3px 3px; fill: none; stroke: #dfe3e8; stroke-width: 1.200; }
.sb.on { background: #5b93cc; }
.sd { flex: none; width: 17px; height: 10px; }
.stxt { font-size: 12px; color: #dfe3e8; white-space: nowrap; }
.scale { width: 52px; margin-left: 3px; font-size: 11.500px; }
.g-an { margin-left: -4px; }
.g-plus { margin-left: -3px; }
.g-iso { margin-right: -3px; }
.units { width: 95px; }
.units .stxt { margin-left: 4px; }
.push { margin-left: auto; }

/* overlays */
.wm { position: absolute; left: 0; top: 0; width: 1600px; height: 1333px; pointer-events: none; }
.wm text { fill: rgba(255, 255, 255, .11); font: 700 39px "Liberation Sans", "Noto Sans CJK SC", sans-serif; }
.brand { position: absolute; left: 1406px; top: 1197px; color: #c6c6c6; font: 700 62px/74px "Noto Sans CJK SC", sans-serif; }
.brandid { position: absolute; left: 1360px; top: 1273px; color: #fff; font: 400 35px/42px "Liberation Sans", sans-serif; letter-spacing: -1.400px; -webkit-text-stroke: .5px #fff; white-space: nowrap; }
```
